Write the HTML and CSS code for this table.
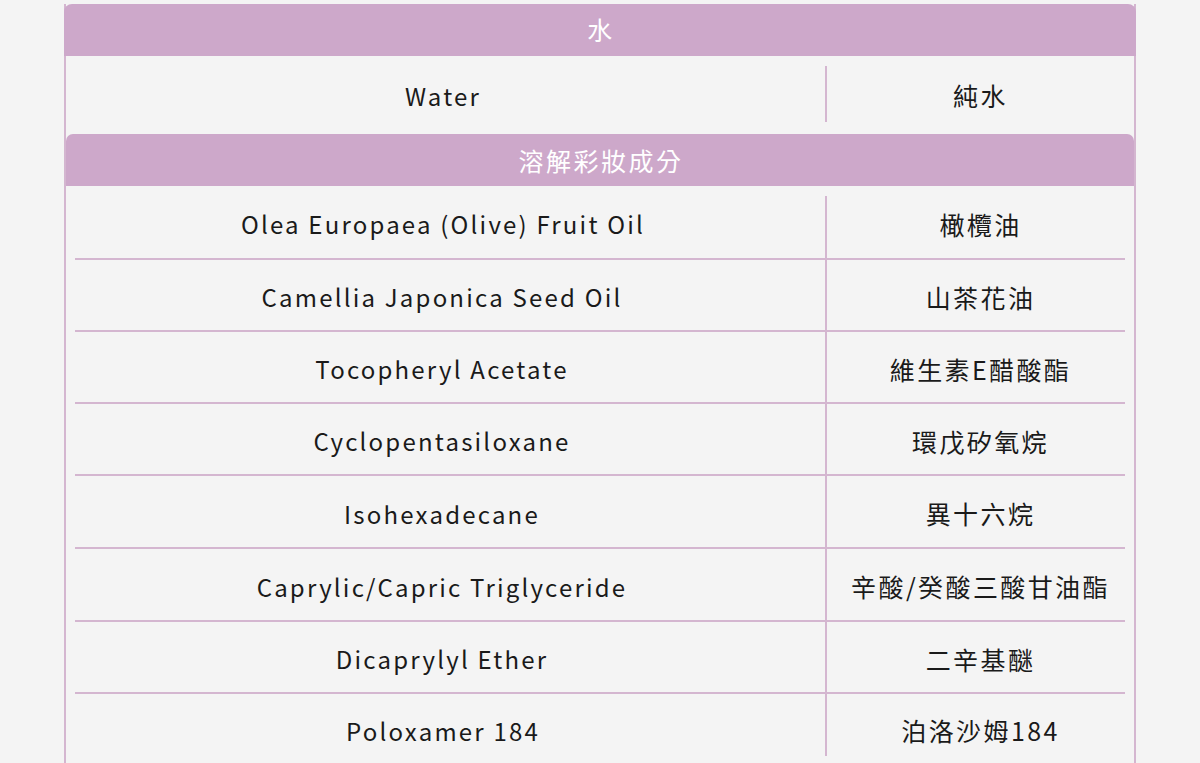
FILE: index.html
```html
<!DOCTYPE html>
<html lang="zh-Hant">
<head>
<meta charset="utf-8">
<link rel="stylesheet" href="styles.css">
</head>
<body>
<div class="ingredients">
  <section class="group group-first">
    <h2 class="group-head">水</h2>
    <div class="group-body">
      <div class="row row-single">
        <div class="cell cell-en">Water</div>
        <div class="cell cell-zh">純水</div>
      </div>
    </div>
  </section>
  <section class="group">
    <h2 class="group-head">溶解彩妝成分</h2>
    <div class="group-body">
      <div class="row">
        <div class="cell cell-en">Olea Europaea (Olive) Fruit Oil</div>
        <div class="cell cell-zh">橄欖油</div>
      </div>
      <div class="row">
        <div class="cell cell-en">Camellia Japonica Seed Oil</div>
        <div class="cell cell-zh">山茶花油</div>
      </div>
      <div class="row">
        <div class="cell cell-en">Tocopheryl Acetate</div>
        <div class="cell cell-zh">維生素E醋酸酯</div>
      </div>
      <div class="row">
        <div class="cell cell-en">Cyclopentasiloxane</div>
        <div class="cell cell-zh">環戊矽氧烷</div>
      </div>
      <div class="row">
        <div class="cell cell-en">Isohexadecane</div>
        <div class="cell cell-zh">異十六烷</div>
      </div>
      <div class="row">
        <div class="cell cell-en">Caprylic/Capric Triglyceride</div>
        <div class="cell cell-zh">辛酸/癸酸三酸甘油酯</div>
      </div>
      <div class="row">
        <div class="cell cell-en">Dicaprylyl Ether</div>
        <div class="cell cell-zh">二辛基醚</div>
      </div>
      <div class="row">
        <div class="cell cell-en">Poloxamer 184</div>
        <div class="cell cell-zh">泊洛沙姆184</div>
      </div>
    </div>
  </section>
</div>
</body>
</html>
```
FILE: styles.css
```css
* { box-sizing: border-box; }
html, body {
  margin: 0;
  padding: 0;
  background: #f4f4f4;
}
body {
  font-family: "Noto Sans CJK TC", "Noto Sans", sans-serif;
  color: #1a1a1a;
  padding-top: 4px;
}
.ingredients {
  width: 1072px;
  margin-left: 64px;
}
.group {
  border-left: 2px solid #d4b6d0;
  border-right: 2px solid #d4b6d0;
}
.group-head {
  margin: 0;
  height: 52px;
  background: #cda8ca;
  color: #ffffff;
  font-size: 25px;
  font-weight: 400;
  letter-spacing: 2.5px;
  text-indent: 2px;
  line-height: 52px;
  text-align: center;
  border-radius: 7px 7px 0 0;
}
.group-first .group-head {
  margin: 0 -2px;
  border-radius: 8px 8px 0 0;
  line-height: 51px;
}
.group-body {
  padding: 0 9px;
}
.row {
  display: flex;
  height: 72px;
  border-bottom: 2px solid #d4b6d0;
}
.row:first-child {
  height: 74px;
}
.row:nth-child(5),
.row:nth-child(6) {
  height: 73px;
}
.row:last-child {
  border-bottom: none;
}
.row.row-single {
  height: 78px;
}
.cell {
  display: flex;
  align-items: center;
  justify-content: center;
  padding-top: 3px;
  font-size: 24px;
  letter-spacing: 2.2px;
}
.cell-en {
  width: 752px;
  padding-right: 16px;
  border-right: 2px solid #d4b6d0;
}
.cell-zh {
  flex: 1;
  padding-left: 9px;
  font-size: 25px;
  letter-spacing: 2.4px;
}
.row:first-child .cell-en {
  border-right: none;
  background: linear-gradient(#d4b6d0, #d4b6d0) no-repeat right bottom / 2px calc(100% - 10px);
}
.row:last-child .cell {
  padding-top: 0;
}
.row:last-child .cell-en {
  border-right: none;
  background: linear-gradient(#d4b6d0, #d4b6d0) no-repeat right top / 2px calc(100% - 10px);
}
.row.row-single .cell-en {
  border-right: none;
  padding-top: 0;
  background: linear-gradient(#d4b6d0, #d4b6d0) no-repeat right 10px / 2px 56px;
}
.row.row-single .cell-zh {
  padding-top: 0;
}
```
